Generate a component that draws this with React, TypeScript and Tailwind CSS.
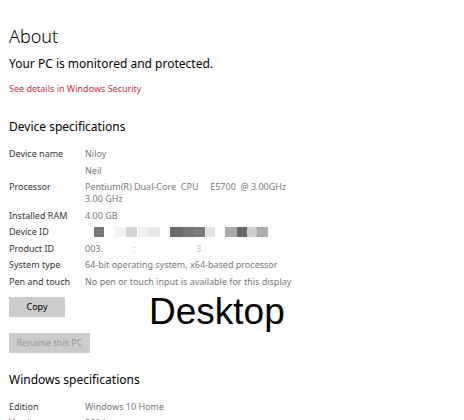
const specs: { label: string; value: React.ReactNode }[] = [
    { label: 'Device name', value: 'Niloy' },
    { label: '', value: 'Neil' },
    { label: 'Processor', value: 'Pentium(R) Dual-Core  CPU     E5700  @ 3.00GHz\n3.00 GHz' },
    { label: 'Installed RAM', value: '4.00 GB' },
    { label: 'Device ID', value: <DeviceIdBlur /> },
    { label: 'Product ID', value: <ProductIdBlur /> },
    { label: 'System type', value: '64-bit operating system, x64-based processor' },
    { label: 'Pen and touch', value: 'No pen or touch input is available for this display' },
];

// pixelated blur tiles over the real id
const idTiles = [
    { gap: 'ml-[9px]', w: 'w-[10px]', bg: 'bg-[#777]' },
    { gap: 'ml-[11px]', w: 'w-[11px]', bg: 'bg-[#f3f3f3]' },
    { gap: '', w: 'w-[11px]', bg: 'bg-[#d2d2d2]' },
    { gap: 'ml-[1px]', w: 'w-[10px]', bg: 'bg-[#f1f1f1]' },
    { gap: '', w: 'w-[12px]', bg: 'bg-[#e6e6e6]' },
    { gap: 'ml-[10px]', w: 'w-[12px]', bg: 'bg-[#6c6c6c]' },
    { gap: '', w: 'w-[11px]', bg: 'bg-[#727272]' },
    { gap: '', w: 'w-[12px]', bg: 'bg-[#7b7b7b]' },
    { gap: '', w: 'w-[10px]', bg: 'bg-[#e2e2e2]' },
    { gap: 'ml-[10px]', w: 'w-[12px]', bg: 'bg-[#ababab]' },
    { gap: '', w: 'w-[10px]', bg: 'bg-[#676767]' },
    { gap: '', w: 'w-[10px]', bg: 'bg-[#cfcfcf]' },
    { gap: '', w: 'w-[11px]', bg: 'bg-[#adadad]' },
];

function DeviceIdBlur() {
    return (
        <div className="flex h-[12px] items-center">
            {idTiles.map((t, i) => (
                <span key={i} className={`h-[10px] ${t.gap} ${t.w} ${t.bg}`} />
            ))}
        </div>
    );
}

function ProductIdBlur() {
    return (
        <div className="flex h-[12px]">
            <span className="w-[48px]">003.</span>
            <span className="w-[63px] text-[#bbb]">:</span>
            <span className="text-[#bbb]">3</span>
        </div>
    );
}

export default function App() {
    return (
        <div className="relative h-[420px] w-[464px] overflow-hidden bg-white px-[9px] font-['Noto_Sans','Open_Sans',sans-serif] text-[#222]">
            <h1 className="pt-[23px] text-[18px] font-light leading-[26px] text-black">About</h1>
            <p className="mt-[6px] text-[12px] leading-[18px] text-black">Your PC is monitored and protected.</p>
            <a className="mt-[10px] block text-[9px] leading-[12px] text-[#c4314b]">See details in Windows Security</a>

            <h2 className="mt-[23px] text-[12px] leading-[18px] text-black">Device specifications</h2>
            <div className="mt-[12px] flex flex-col gap-[4.5px] text-[9px] leading-[12px]">
                {specs.map((s, i) => (
                    <div key={i} className="flex">
                        <div className="w-[76px] shrink-0 text-[#333]">{s.label}</div>
                        <div className="flex-1 whitespace-pre text-[#777]">{s.value}</div>
                    </div>
                ))}
            </div>

            <div className="mt-[9px] flex flex-col items-start gap-[16px] text-[9px]">
                <button className="h-[20px] w-[56px] bg-[#cccccc] text-black">Copy</button>
                <button className="h-[20px] w-[81px] bg-[#cccccc] text-[#999]">Rename this PC</button>
            </div>

            <h2 className="mt-[18px] text-[12px] leading-[18px] text-black">Windows specifications</h2>
            <div className="mt-[12px] flex flex-col gap-[4.5px] text-[9px] leading-[12px]">
                <div className="flex">
                    <div className="w-[76px] shrink-0 text-[#333]">Edition</div>
                    <div className="text-[#777]">Windows 10 Home</div>
                </div>
                <div className="flex">
                    <div className="w-[76px] shrink-0 text-[#333]">Version</div>
                    <div className="text-[#777]">2004</div>
                </div>
            </div>

            {/* overlay label */}
            <div className="absolute left-[149px] top-[290px] font-['Liberation_Sans',Arial,sans-serif] text-[37px] leading-[44px] text-black">
                Desktop
            </div>
        </div>
    );
}
